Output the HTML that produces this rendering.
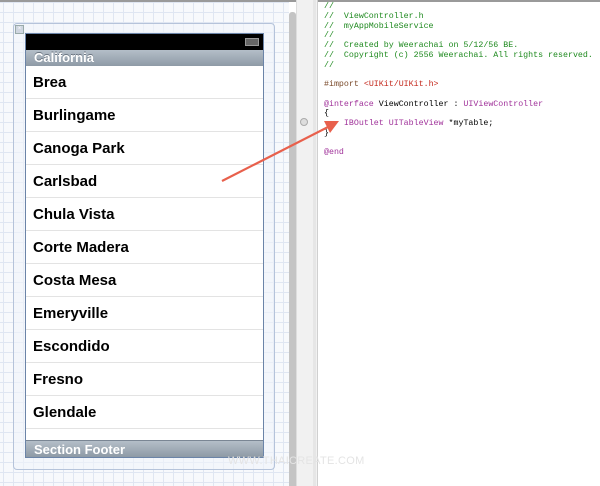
<!DOCTYPE html>
<html><head><style>
body{margin:0;width:600px;height:486px;overflow:hidden;position:relative;background:#fff;font-family:"Liberation Sans",sans-serif}
.grid{position:absolute;left:0;top:0;width:289px;height:486px;background-color:#f7f9fc;
background-image:linear-gradient(#dfe6f2 1px,transparent 1px),linear-gradient(90deg,#dfe6f2 1px,transparent 1px);background-size:10px 10px;background-position:3px 2px}
.top{position:absolute;left:0;top:0;width:600px;height:2px;background:#9a9a9a}
.sb{position:absolute;left:289px;top:12px;width:7px;height:474px;background:#c4c4c4;border-radius:3px 3px 0 0}
.gut{position:absolute;left:296px;top:0;width:20px;height:486px;background:#f1f1f1;border-left:1px solid #ddd;border-right:1px solid #d0d0d0}
.gut2{position:absolute;left:313px;top:0;width:3px;height:486px;background:#e6e6e6}
.dot{position:absolute;left:300px;top:118px;width:6px;height:6px;border-radius:50%;border:1px solid #aaa;background:#ddd}
.frame{position:absolute;left:13px;top:23px;width:260px;height:445px;border:1px solid #b5c3da;border-radius:4px;background:rgba(240,244,250,.6)}
.x{position:absolute;left:15px;top:25px;width:7px;height:7px;border:1px solid #9aa;background:#cfd6e0;font-size:6px;line-height:7px;text-align:center;color:#fff}
.phone{position:absolute;left:25px;top:33px;width:237px;height:423px;border:1px solid #6b84a8;background:#fff;overflow:hidden}
.status{height:16px;background:#000;position:relative}
.bat{position:absolute;right:4px;top:4px;width:12px;height:6px;border:1px solid #999;background:#666}
.hdr{height:16px;background:linear-gradient(#b4bec8,#8e9aa6);color:#fff;font-weight:bold;font-size:13px;line-height:16px;padding-left:8px;text-shadow:0 -1px 0 #6a7480}
.row{height:32px;border-bottom:1px solid #e3e3e3;font-weight:bold;font-size:15px;line-height:34px;padding-left:7px;color:#000}
.ftr{position:absolute;left:0;bottom:0;width:237px;height:17px;background:linear-gradient(#b4bec8,#8e9aa6);color:#fff;font-weight:bold;font-size:13px;line-height:17px;padding-left:8px;box-sizing:border-box;border-top:1px solid #7a8694}
.code{position:absolute;left:324px;top:2px;font-family:"Liberation Mono",monospace;font-size:8.3px;line-height:9.75px;white-space:pre;color:#000}
.c{color:#1f8a1f}.p{color:#a0329a}.r{color:#c4281c}
.wm{position:absolute;left:228px;top:455px;font-size:11px;color:#e4e4e4;letter-spacing:.3px}
</style></head><body>
<div class="grid"></div>
<div class="top"></div>
<div class="sb"></div>
<div class="gut"></div>
<div class="gut2"></div>
<div class="dot"></div>
<div class="frame"></div>
<div class="x">×</div>
<div class="phone">
<div class="status"><div class="bat"></div></div>
<div class="hdr">California</div>
<div class="row">Brea</div><div class="row">Burlingame</div><div class="row">Canoga Park</div><div class="row">Carlsbad</div><div class="row">Chula Vista</div><div class="row">Corte Madera</div><div class="row">Costa Mesa</div><div class="row">Emeryville</div><div class="row">Escondido</div><div class="row">Fresno</div><div class="row">Glendale</div>
<div class="ftr">Section Footer</div>
</div>
<div class="code"><span class="c">//
//  ViewController.h
//  myAppMobileService
//
//  Created by Weerachai on 5/12/56 BE.
//  Copyright (c) 2556 Weerachai. All rights reserved.
//</span>

<span style="color:#7a4a2a">#import</span> <span class="r">&lt;UIKit/UIKit.h&gt;</span>

<span class="p">@interface</span> ViewController : <span class="p">UIViewController</span>
{
    <span class="p">IBOutlet</span> <span class="p">UITableView</span> *myTable;
}

<span class="p">@end</span></div>
<svg style="position:absolute;left:0;top:0" width="600" height="486">
<line x1="222" y1="181" x2="330" y2="126" stroke="#e8604c" stroke-width="2.2"/>
<polygon points="339,121 324,121 330,133" fill="#e8604c"/>
</svg>
<div class="wm">WWW.THAICREATE.COM</div>
</body></html>
